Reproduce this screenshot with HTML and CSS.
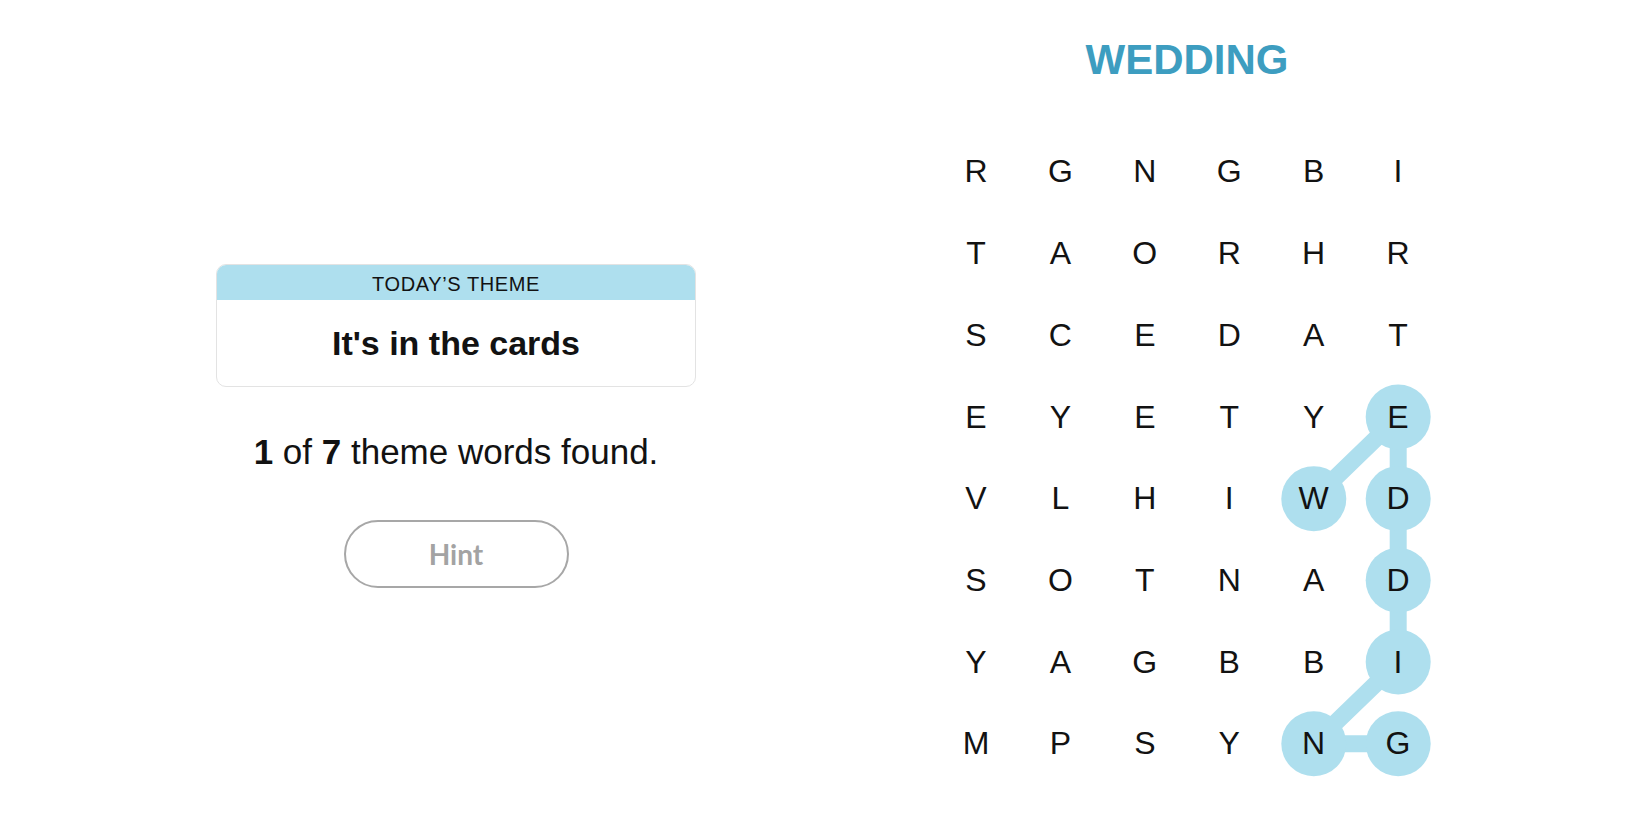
FILE: index.html
```html
<!DOCTYPE html>
<html lang="en">
<head>
    <meta charset="UTF-8">
    <title>Strands</title>
    <link rel="stylesheet" href="styles.css">
</head>
<body>
    <div id="game">
        <div id="side">
            <div class="theme-card">
                <div class="theme-head">TODAY’S THEME</div>
                <div class="theme-body">It's in the cards</div>
            </div>
            <p class="found"><b>1</b> of <b>7</b> theme words found.</p>
            <button class="hint">Hint</button>
        </div>

        <div id="board-area">
            <div class="word">WEDDING</div>
            <div class="board">
                <svg class="path" width="506.4" height="653.6" viewBox="0 0 506.4 653.6">
                    <polyline points="379.8,367.65 464.2,285.95 464.2,367.65 464.2,449.35 464.2,531.05 379.8,612.75 464.2,612.75" fill="none" stroke="#aedfee" stroke-width="17"/>
                    <circle cx="379.8" cy="367.65" r="32.5" fill="#aedfee"/>
                    <circle cx="464.2" cy="285.95" r="32.5" fill="#aedfee"/>
                    <circle cx="464.2" cy="367.65" r="32.5" fill="#aedfee"/>
                    <circle cx="464.2" cy="449.35" r="32.5" fill="#aedfee"/>
                    <circle cx="464.2" cy="531.05" r="32.5" fill="#aedfee"/>
                    <circle cx="379.8" cy="612.75" r="32.5" fill="#aedfee"/>
                    <circle cx="464.2" cy="612.75" r="32.5" fill="#aedfee"/>
                </svg>
                <span>R</span><span>G</span><span>N</span><span>G</span><span>B</span><span>I</span>
                <span>T</span><span>A</span><span>O</span><span>R</span><span>H</span><span>R</span>
                <span>S</span><span>C</span><span>E</span><span>D</span><span>A</span><span>T</span>
                <span>E</span><span>Y</span><span>E</span><span>T</span><span>Y</span><span>E</span>
                <span>V</span><span>L</span><span>H</span><span>I</span><span>W</span><span>D</span>
                <span>S</span><span>O</span><span>T</span><span>N</span><span>A</span><span>D</span>
                <span>Y</span><span>A</span><span>G</span><span>B</span><span>B</span><span>I</span>
                <span>M</span><span>P</span><span>S</span><span>Y</span><span>N</span><span>G</span>
            </div>
        </div>
    </div>
</body>
</html>
```

FILE: styles.css
```css
body {
    margin: 0;
    padding: 0;
    background: white;
    color: #121212;
    font-family: "Liberation Sans", Arial, sans-serif;
}

#game {
    display: flex;
    height: 825px;
}

#side {
    width: 912px;
    display: flex;
    flex-direction: column;
    align-items: center;
    padding-top: 264px;
    box-sizing: border-box;
}

.theme-card {
    width: 480px;
    border: 1px solid #e3e3e3;
    border-radius: 10px;
    overflow: hidden;
    box-sizing: border-box;
}

.theme-head {
    background-color: #aedfee;
    height: 35px;
    line-height: 38px;
    text-align: center;
    font-size: 20px;
    letter-spacing: 0.6px;
}

.theme-body {
    height: 86px;
    line-height: 86px;
    text-align: center;
    font-size: 34px;
    font-weight: bold;
}

.found {
    margin: 45px 0 0 0;
    font-size: 35px;
    line-height: 40px;
}

.hint {
    margin-top: 48px;
    width: 225px;
    height: 68px;
    border: 2px solid #a7a7a7;
    border-radius: 34px;
    background: white;
    color: #a3a3a3;
    font-family: Lato, "Liberation Sans", sans-serif;
    font-weight: bold;
    font-size: 28px;
    cursor: pointer;
}

#board-area {
    width: 550px;
    display: flex;
    flex-direction: column;
    align-items: center;
    padding-top: 35px;
}

.word {
    font-size: 42px;
    line-height: 50px;
    font-weight: bold;
    color: #3d9dc0;
}

.board {
    position: relative;
    margin-top: 45.6px;
    display: grid;
    grid-template-columns: repeat(6, 84.4px);
    grid-template-rows: repeat(8, 81.7px);
}

.board .path {
    position: absolute;
    left: 0;
    top: 0;
}

.board span {
    position: relative;
    display: flex;
    align-items: center;
    justify-content: center;
    font-size: 32px;
    line-height: 1;
}
```
